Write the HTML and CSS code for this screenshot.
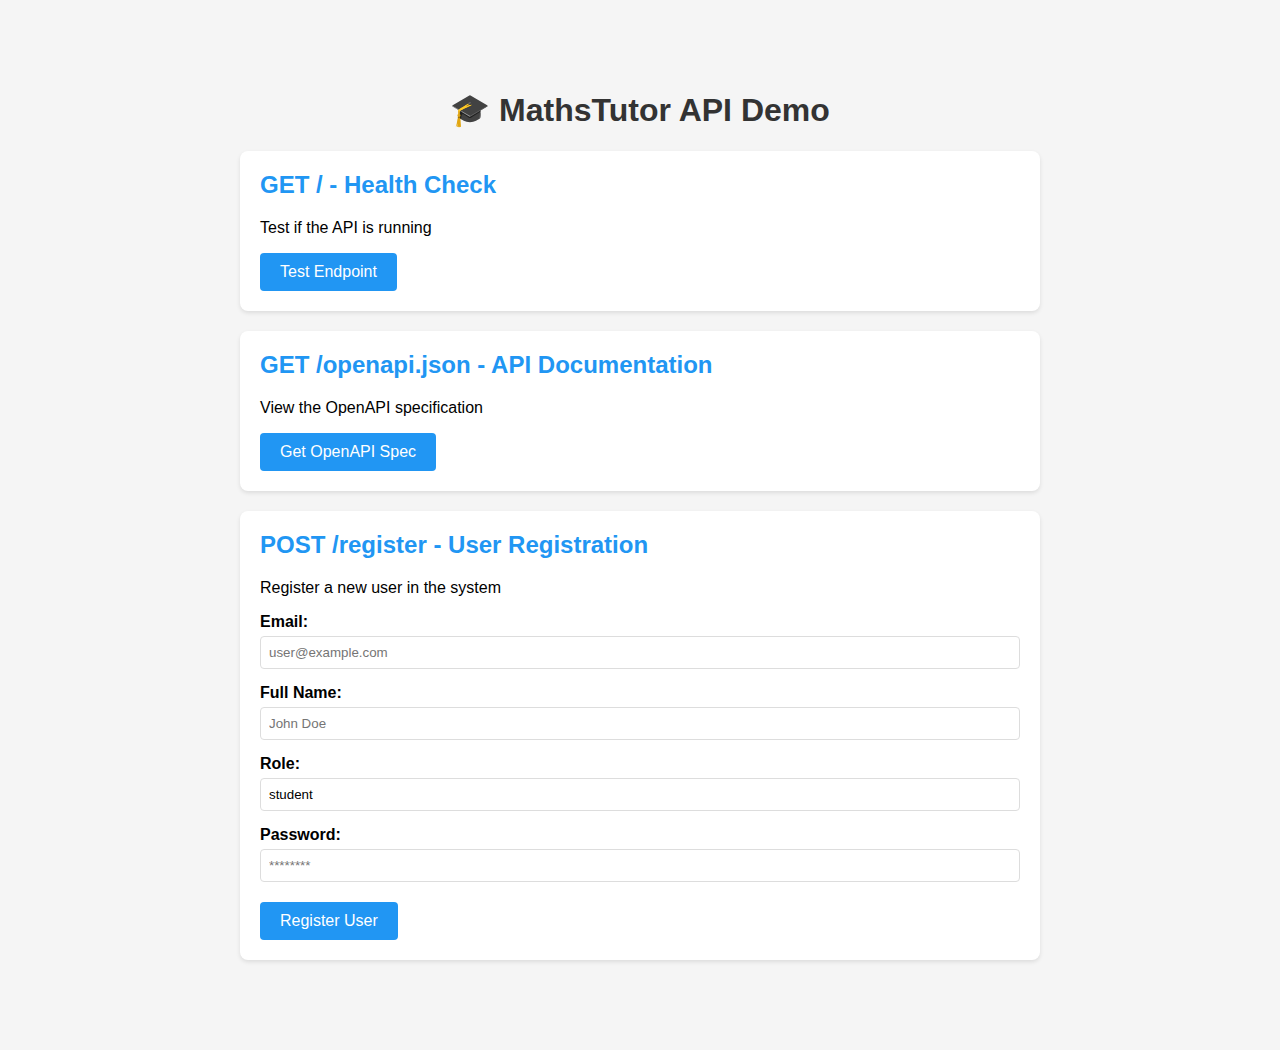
FILE: index.html
```html
<!DOCTYPE html>
<html lang="en">
<head>
<meta charset="UTF-8">
<title>MathsTutor API Demo</title>
<link rel="stylesheet" href="styles.css">
</head>
<body>
<h1>🎓 MathsTutor API Demo</h1>
<section class="card">
<h2>GET / - Health Check</h2>
<p>Test if the API is running</p>
<button class="btn">Test Endpoint</button>
</section>
<section class="card">
<h2>GET /openapi.json - API Documentation</h2>
<p>View the OpenAPI specification</p>
<button class="btn">Get OpenAPI Spec</button>
</section>
<section class="card">
<h2>POST /register - User Registration</h2>
<p>Register a new user in the system</p>
<form>
<div class="field"><label for="email">Email:</label><input id="email" type="email" placeholder="user@example.com"></div>
<div class="field"><label for="name">Full Name:</label><input id="name" type="text" placeholder="John Doe"></div>
<div class="field"><label for="role">Role:</label><input id="role" type="text" value="student"></div>
<div class="field"><label for="password">Password:</label><input id="password" type="password" placeholder="********"></div>
<button class="btn btn-submit" type="button">Register User</button>
</form>
</section>
</body>
</html>
```
FILE: styles.css
```css
body {
  font-family: "Liberation Sans", Arial, sans-serif;
  max-width: 800px;
  margin: 50px auto;
  padding: 20px;
  background: #f5f5f5;
}
h1 {
  margin: 21.44px 0;
  color: #333;
  text-align: center;
}
.card {
  background: #fff;
  padding: 20px;
  margin: 20px 0;
  border-radius: 8px;
  box-shadow: 0 2px 4px rgba(0, 0, 0, 0.1);
}
.card h2 {
  margin: 0 0 20px;
  color: #2196f3;
}
.card p {
  margin: 16px 0;
}
.btn {
  display: block;
  background: #2196f3;
  color: #fff;
  border: none;
  padding: 10px 20px;
  border-radius: 4px;
  font-family: inherit;
  font-size: 16px;
  cursor: pointer;
}
.field {
  margin: 15px 0;
}
label {
  display: block;
  margin-bottom: 5px;
  font-weight: bold;
}
input {
  display: block;
  width: 100%;
  padding: 8px;
  border: 1px solid #ddd;
  border-radius: 4px;
  box-sizing: border-box;
}
.btn-submit {
  margin-top: 20px;
}
```
